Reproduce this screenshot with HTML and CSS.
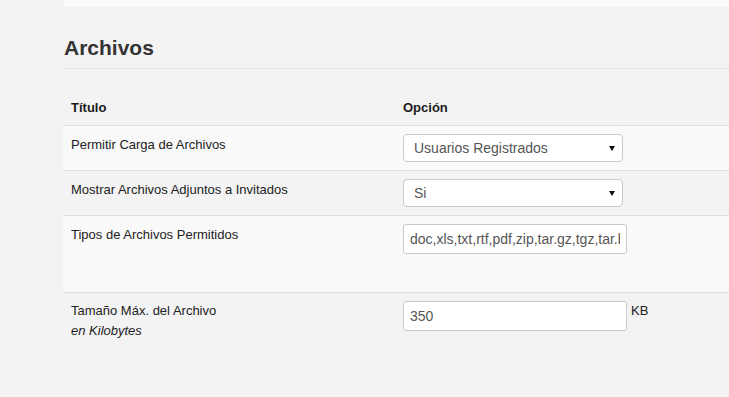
FILE: index.html
```html
<!DOCTYPE html>
<html lang="es">
<head>
<meta charset="utf-8">
<title>Archivos</title>
<link rel="stylesheet" href="styles.css">
</head>
<body>
<div class="page">
  <div class="prev-panel"></div>
  <section class="section">
    <h2 class="section-title">Archivos</h2>
    <table class="settings">
      <thead>
        <tr><th class="col-title">Título</th><th>Opción</th></tr>
      </thead>
      <tbody>
        <tr class="odd">
          <td class="label">Permitir Carga de Archivos</td>
          <td>
            <div class="select-wrap">
              <select class="select"><option>Usuarios Registrados</option></select>
            </div>
          </td>
        </tr>
        <tr>
          <td class="label">Mostrar Archivos Adjuntos a Invitados</td>
          <td>
            <div class="select-wrap">
              <select class="select"><option>Si</option></select>
            </div>
          </td>
        </tr>
        <tr class="odd">
          <td class="label">Tipos de Archivos Permitidos</td>
          <td>
            <div class="field-tall">
              <input class="input" type="text" value="doc,xls,txt,rtf,pdf,zip,tar.gz,tgz,tar.bz2">
            </div>
          </td>
        </tr>
        <tr>
          <td class="label label-multi">Tamaño Máx. del Archivo<br><em>en Kilobytes</em></td>
          <td>
            <div class="field-unit">
              <input class="input" type="text" value="350">
              <span class="unit">KB</span>
            </div>
          </td>
        </tr>
      </tbody>
    </table>
  </section>
</div>
</body>
</html>
```

FILE: styles.css
```css
html, body {
  margin: 0;
  padding: 0;
}

body {
  background: #f3f3f3;
  font-family: "Liberation Sans", Arial, sans-serif;
  font-size: 13px;
  line-height: 20px;
  color: #333;
  overflow: hidden;
  width: 729px;
  height: 397px;
}

.page {
  padding-left: 63px;
}

.prev-panel {
  height: 7px;
  margin-left: 1px;
  background: #fafafa;
}

.section {
  width: 666px;
}

.section-title {
  margin: 29px 0 0 0;
  padding: 0 0 9px 1px;
  font-size: 21px;
  line-height: 23px;
  font-weight: bold;
  color: #333;
  border-bottom: 1px solid #e2e2e2;
}

.settings {
  margin-top: 20px;
  width: 100%;
  border-collapse: collapse;
  border-spacing: 0;
}

.settings th {
  text-align: left;
  font-weight: bold;
  color: #1a1a1a;
  padding: 9px 8px 7px;
  line-height: 20px;
}

.settings .col-title {
  width: 316px;
}

.settings td {
  border-top: 1px solid #dedede;
  padding: 8px;
  vertical-align: top;
}

.settings td.label {
  padding-top: 9px;
  padding-bottom: 7px;
}

.settings td.label-multi {
  padding-top: 8px;
}

.settings tr.odd td {
  background: #f9f9f9;
}

.label {
  color: #222;
}

.label em {
  font-style: italic;
}

.select-wrap {
  position: relative;
  width: 220px;
}

.select-wrap::after {
  content: "";
  position: absolute;
  right: 8px;
  top: 12px;
  border-left: 3px solid transparent;
  border-right: 3px solid transparent;
  border-top: 5px solid #111;
  pointer-events: none;
}

.select {
  display: block;
  width: 220px;
  height: 28px;
  margin: 0;
  padding: 0 20px 0 10px;
  -webkit-appearance: none;
  appearance: none;
  background: #fff;
  border: 1px solid #cacaca;
  border-radius: 4px;
  font-family: "Liberation Sans", Arial, sans-serif;
  font-size: 14px;
  color: #555;
  box-sizing: border-box;
}

.input {
  display: block;
  width: 224px;
  height: 30px;
  margin: 0;
  padding: 0 6px;
  background: #fff;
  border: 1px solid #cacaca;
  border-radius: 3px;
  font-family: "Liberation Sans", Arial, sans-serif;
  font-size: 14px;
  color: #555;
  box-sizing: border-box;
}

.field-tall {
  padding-bottom: 30px;
}

.field-unit {
  display: flex;
  align-items: flex-start;
  gap: 4px;
}

.unit {
  color: #222;
  line-height: 20px;
}
```
